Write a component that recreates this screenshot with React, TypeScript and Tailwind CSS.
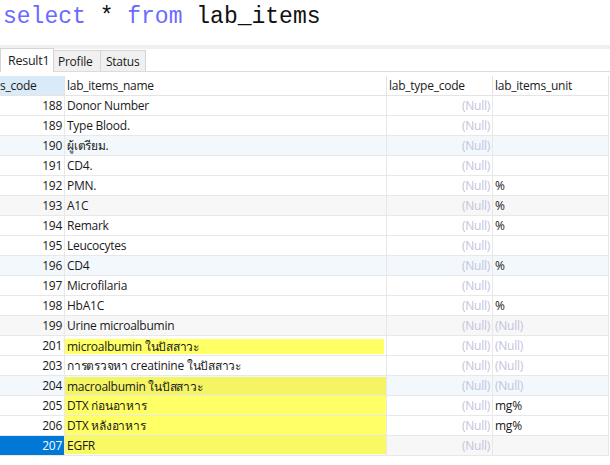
import React from "react";

type Row = {
  code: string;
  name: string;
  unit: string;
  unitNull?: boolean;
  bg?: string;
  yellow?: string;
  selected?: boolean;
};

const rows: Row[] = [
  { code: "188", name: "Donor Number", unit: "" },
  { code: "189", name: "Type Blood.", unit: "" },
  { code: "190", name: "ผู้เตรียม.", unit: "", bg: "bg-[#f3f8fd]" },
  { code: "191", name: "CD4.", unit: "" },
  { code: "192", name: "PMN.", unit: "%" },
  { code: "193", name: "A1C", unit: "%", bg: "bg-[#f7f7f7]" },
  { code: "194", name: "Remark", unit: "%" },
  { code: "195", name: "Leucocytes", unit: "" },
  { code: "196", name: "CD4", unit: "%", bg: "bg-[#f3f8fd]" },
  { code: "197", name: "Microfilaria", unit: "" },
  { code: "198", name: "HbA1C", unit: "%" },
  { code: "199", name: "Urine microalbumin", unit: "(Null)", unitNull: true, bg: "bg-[#f7f7f7]" },
  { code: "201", name: "microalbumin ในปัสสาวะ", unit: "(Null)", unitNull: true, yellow: "single" },
  { code: "203", name: "การตรวจหา creatinine  ในปัสสาวะ", unit: "(Null)", unitNull: true },
  { code: "204", name: "macroalbumin ในปัสสาวะ", unit: "(Null)", unitNull: true, bg: "bg-[#f3f8fd]", yellow: "top" },
  { code: "205", name: "DTX ก่อนอาหาร", unit: "mg%", yellow: "mid" },
  { code: "206", name: "DTX หลังอาหาร", unit: "mg%", yellow: "mid" },
  { code: "207", name: "EGFR", unit: "", bg: "bg-[#f7f7f7]", yellow: "bottom", selected: true },
];

const font = { fontFamily: '"Open Sans", "Noto Sans", "Noto Sans CJK SC", sans-serif' };

export default function App() {
  return (
    <div
      className="w-[610px] h-[465px] bg-white overflow-hidden text-[12px] tracking-[-0.25px] text-[#1a1a1a]"
      style={font}
    >
      {/* SQL editor */}
      <div className="h-[45px] bg-white pl-[3px] pt-[4px] tracking-normal">
        <div className="text-[23px] leading-[26px] text-[#111]" style={{ fontFamily: '"Liberation Mono", monospace' }}>
          <span className="text-[#6a6aff]">select</span> * <span className="text-[#6a6aff]">from</span> lab_items
        </div>
      </div>
      <div className="h-[4px] bg-[#f0f0f0]" />
      {/* Tabs */}
      <div className="h-[23px] flex items-end border-b border-[#dcdcdc]">
        <div className="h-[24px] w-[54px] bg-white border border-b-0 border-[#d5d5d5] -mb-px flex items-center pl-[7px] pt-[1px] text-[12.5px] z-10">
          Result1
        </div>
        <div className="h-[21px] w-[47px] bg-[#f0f0f0] border border-l-0 border-b-0 border-[#d5d5d5] flex items-center pl-[4px] pt-[1px]">
          Profile
        </div>
        <div className="h-[21px] w-[45px] bg-[#f0f0f0] border border-l-0 border-b-0 border-[#d5d5d5] flex items-center pl-[5px] pt-[1px]">
          Status
        </div>
      </div>
      {/* Grid */}
      <div className="pt-[4px]">
        <div className="flex h-[20px]">
          <div className="w-[65px] bg-[#d9eaf8] border-r border-b border-[#e4e4e4] flex items-center pt-[1px]">s_code</div>
          <div className="w-[322px] border-r border-b border-[#e4e4e4] pl-[2px] flex items-center pt-[1px]">lab_items_name</div>
          <div className="w-[106px] border-r border-b border-[#e4e4e4] pl-[2px] flex items-center pt-[1px]">lab_type_code</div>
          <div className="w-[116px] border-r border-b border-[#e4e4e4] pl-[2px] flex items-center pt-[1px]">lab_items_unit</div>
          <div className="flex-1" />
        </div>
        {rows.map((r) => (
          <div key={r.code} className={`flex h-[20px] ${r.bg ?? "bg-white"}`}>
            <div
              className={`w-[65px] border-r border-b border-[#e8e8e8] pr-[2px] pt-[1px] flex items-center justify-end ${
                r.selected ? "bg-[#0078d7] text-white" : ""
              }`}
            >
              {r.code}
            </div>
            <div className="w-[322px] border-r border-b border-[#e8e8e8] flex">
              {r.yellow === "single" ? (
                <div className="flex-1 mr-[2px] mt-[3px] mb-[1px] bg-[#ffff66] flex items-center pl-[2px] pt-[1px]">{r.name}</div>
              ) : r.yellow === "top" ? (
                <div className="flex-1 mt-[1px] bg-[#f5f563] flex items-center pl-[2px] pt-[1px]">{r.name}</div>
              ) : r.yellow === "mid" ? (
                <div className="flex-1 bg-[#ffff66] flex items-center pl-[2px] pt-[1px]">{r.name}</div>
              ) : r.yellow === "bottom" ? (
                <div className="flex-1 mb-[1px] bg-[#f9f964] flex items-center pl-[2px] pt-[1px]">{r.name}</div>
              ) : (
                <div className="flex-1 flex items-center pl-[2px] pt-[1px]">{r.name}</div>
              )}
            </div>
            <div className="w-[106px] border-r border-b border-[#e8e8e8] pr-[2px] pt-[1px] flex items-center justify-end text-[#c4c4dc]">
              (Null)
            </div>
            <div
              className={`w-[116px] border-r border-b border-[#e8e8e8] pl-[2px] pt-[1px] flex items-center ${
                r.unitNull ? "text-[#c4c4dc]" : ""
              }`}
            >
              {r.unit}
            </div>
            <div className="flex-1 bg-white" />
          </div>
        ))}
      </div>
    </div>
  );
}
